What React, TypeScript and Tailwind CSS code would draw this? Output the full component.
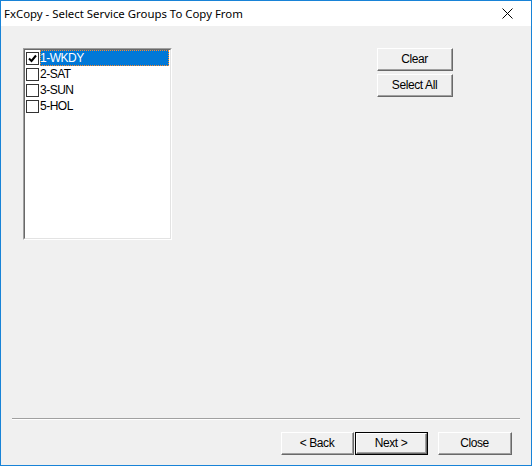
import React, { useState } from "react";

const groups = ["1-WKDY", "2-SAT", "3-SUN", "5-HOL"];

function WinButton({
  label,
  isDefault,
  className = "",
}: {
  label: string;
  isDefault?: boolean;
  className?: string;
}) {
  return (
    <button
      className={`h-[23px] ${isDefault ? "border border-[#000]" : ""} ${className}`}
      style={{ fontFamily: '"Liberation Sans", Arial, sans-serif' }}
    >
      <div className="h-full w-full border-t border-l border-t-white border-l-white border-b border-r border-b-[#696969] border-r-[#696969] bg-[#f0f0f0]">
        <div className="h-full w-full border-b border-r border-b-[#a0a0a0] border-r-[#a0a0a0] flex items-center justify-center text-[12px] tracking-[-0.4px] text-black">
          {label}
        </div>
      </div>
    </button>
  );
}

export default function App() {
  const [checked, setChecked] = useState<boolean[]>([true, false, false, false]);
  const selected = 0;

  const toggle = (i: number) =>
    setChecked((c) => c.map((v, j) => (j === i ? !v : v)));

  return (
    <div className="w-[532px] h-[466px] border border-[#1883d7] bg-[#f0f0f0] flex flex-col overflow-hidden">
      {/* Title bar */}
      <div className="h-[25px] bg-white flex items-center justify-between shrink-0">
        <span
          className="pl-[3px] text-[11.4px] text-black"
          style={{ fontFamily: '"Noto Sans", "Segoe UI", sans-serif' }}
        >
          FxCopy - Select Service Groups To Copy From
        </span>
        <svg width="11" height="11" viewBox="0 0 11 11" className="mr-[18px]">
          <path d="M0.5 0.5L10.5 10.5M10.5 0.5L0.5 10.5" stroke="#000" strokeWidth="1" />
        </svg>
      </div>

      {/* Body */}
      <div className="flex-1 flex flex-col">
        <div className="flex-1 flex pt-[22px] pl-[22px]">
          {/* Checked listbox */}
          <div className="w-[149px] h-[192px] border-t border-l border-t-[#a0a0a0] border-l-[#a0a0a0] border-b border-r border-b-white border-r-white">
            <div
              className="h-full w-full bg-white border-t border-l border-t-[#696969] border-l-[#696969] border-b border-r border-b-[#e3e3e3] border-r-[#e3e3e3]"
              style={{ fontFamily: '"Liberation Sans", Arial, sans-serif' }}
            >
              {groups.map((g, i) => (
                <div key={g} className="h-[16px] flex items-center" onClick={() => toggle(i)}>
                  <div className="w-[13px] h-[13px] ml-[1px] mr-[1px] border border-[#333] bg-white flex items-center justify-center shrink-0">
                    {checked[i] && (
                      <svg width="9" height="9" viewBox="0 0 9 9">
                        <path d="M1 4.5L3.5 7L8 1.5" stroke="#000" strokeWidth="2" fill="none" />
                      </svg>
                    )}
                  </div>
                  <div
                    className={`flex-1 h-full flex items-center text-[12px] tracking-[-0.5px] leading-none ${
                      i === selected
                        ? "bg-[#0078d7] text-white outline-1 outline-dotted outline-[#ff8a28] -outline-offset-1 mr-[1px]"
                        : "text-black"
                    }`}
                  >
                    {g}
                  </div>
                </div>
              ))}
            </div>
          </div>

          <div className="flex flex-col gap-[3px] ml-[205px]">
            <WinButton label="Clear" className="w-[76px]" />
            <WinButton label="Select All" className="w-[76px]" />
          </div>
        </div>

        {/* Separator */}
        <div className="mx-[11px] h-[2px] border-t border-t-[#a0a0a0] border-b border-b-white" />

        {/* Footer buttons */}
        <div className="flex h-[45px] items-start pt-[12px] pl-[280px]">
          <WinButton label="< Back" className="w-[73px]" />
          <WinButton label="Next >" isDefault className="w-[73px] ml-[1px]" />
          <WinButton label="Close" className="w-[74px] ml-[10px]" />
        </div>
      </div>
    </div>
  );
}
